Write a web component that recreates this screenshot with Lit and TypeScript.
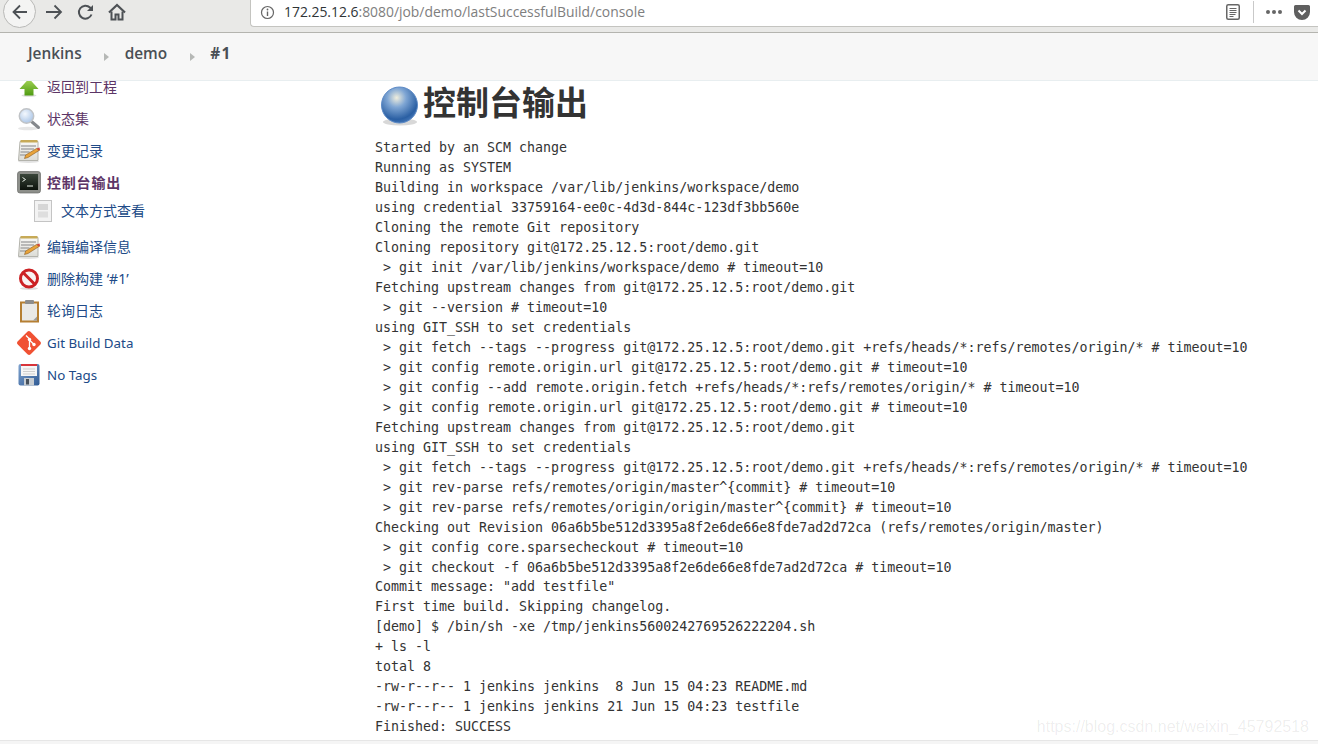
import { LitElement, html, css, svg } from "lit";
import { customElement } from "lit/decorators.js";

const LOG = `Started by an SCM change
Running as SYSTEM
Building in workspace /var/lib/jenkins/workspace/demo
using credential 33759164-ee0c-4d3d-844c-123df3bb560e
Cloning the remote Git repository
Cloning repository git@172.25.12.5:root/demo.git
 > git init /var/lib/jenkins/workspace/demo # timeout=10
Fetching upstream changes from git@172.25.12.5:root/demo.git
 > git --version # timeout=10
using GIT_SSH to set credentials
 > git fetch --tags --progress git@172.25.12.5:root/demo.git +refs/heads/*:refs/remotes/origin/* # timeout=10
 > git config remote.origin.url git@172.25.12.5:root/demo.git # timeout=10
 > git config --add remote.origin.fetch +refs/heads/*:refs/remotes/origin/* # timeout=10
 > git config remote.origin.url git@172.25.12.5:root/demo.git # timeout=10
Fetching upstream changes from git@172.25.12.5:root/demo.git
using GIT_SSH to set credentials
 > git fetch --tags --progress git@172.25.12.5:root/demo.git +refs/heads/*:refs/remotes/origin/* # timeout=10
 > git rev-parse refs/remotes/origin/master^{commit} # timeout=10
 > git rev-parse refs/remotes/origin/origin/master^{commit} # timeout=10
Checking out Revision 06a6b5be512d3395a8f2e6de66e8fde7ad2d72ca (refs/remotes/origin/master)
 > git config core.sparsecheckout # timeout=10
 > git checkout -f 06a6b5be512d3395a8f2e6de66e8fde7ad2d72ca # timeout=10
Commit message: "add testfile"
First time build. Skipping changelog.
[demo] $ /bin/sh -xe /tmp/jenkins5600242769526222204.sh
+ ls -l
total 8
-rw-r--r-- 1 jenkins jenkins  8 Jun 15 04:23 README.md
-rw-r--r-- 1 jenkins jenkins 21 Jun 15 04:23 testfile
Finished: SUCCESS`;

const notepad = (id: string) => svg`<svg width="24" height="24" viewBox="0 0 24 24">
  <defs><linearGradient id="${id}" x1="0" y1="0" x2="0" y2="1"><stop offset="0" stop-color="#f8f8f5"/><stop offset="1" stop-color="#dcdcd6"/></linearGradient></defs>
  <ellipse cx="11.500" cy="22.500" rx="10.500" ry="1.500" fill="#e2e2e2"/>
  <path d="M3 2.500h18v19H1.500z" fill="url(#${id})" stroke="#b3b3ac" stroke-width="1"/>
  <path d="M3.500 1h17v2.500h-17z" fill="#c7aa57"/>
  <path d="M4 7h15M4 10h13M3.500 13h9M3 16h6" stroke="#a8a8a8" stroke-width="1.300"/>
  <path d="M7.500 19.500l1.200-3.500L19.500 9.500l3 1.700L11 18.500z" fill="#e8a33a" stroke="#8a5a20" stroke-width=".6"/>
  <path d="M19.500 9.500l3-1 .5 2.500-1.200 .6z" fill="#d0473a"/>
</svg>`;

const ICONS: Record<string, unknown> = {
  up: svg`<svg width="24" height="24" viewBox="0 0 24 24">
    <defs><linearGradient id="g1" x1="0" y1="0" x2="0" y2="1"><stop offset="0" stop-color="#a7d65a"/><stop offset="1" stop-color="#4f9b12"/></linearGradient></defs>
    <ellipse cx="12" cy="20.500" rx="7.500" ry="1.300" fill="#dcdcdc"/>
    <path d="M12 3.500L21.500 14h-5v6.500h-9V14h-5z" fill="url(#g1)"/>
  </svg>`,
  search: svg`<svg width="24" height="24" viewBox="0 0 24 24">
    <defs><radialGradient id="g2" cx=".4" cy=".35" r=".7"><stop offset="0" stop-color="#f4f8fd"/><stop offset="1" stop-color="#a7c3e6"/></radialGradient></defs>
    <ellipse cx="11" cy="21.500" rx="10" ry="1.800" fill="#e6e6e6"/>
    <path d="M14.500 14.500l7 6" stroke="#85888c" stroke-width="3" stroke-linecap="round"/>
    <circle cx="9.500" cy="9" r="7.200" fill="url(#g2)" stroke="#c0c3c6" stroke-width="1.500"/>
  </svg>`,
  note: notepad("n1"),
  note2: notepad("n2"),
  term: svg`<svg width="24" height="24" viewBox="0 0 24 24">
    <defs><linearGradient id="g3" x1="0" y1="0" x2="0" y2="1"><stop offset="0" stop-color="#3a463a"/><stop offset="1" stop-color="#0c120c"/></linearGradient></defs>
    <rect x=".5" y=".5" width="23" height="21.500" rx="2.500" fill="#8d8f8a" stroke="#6a6c68" stroke-width=".7"/>
    <rect x="3" y="3" width="18" height="16" fill="url(#g3)"/>
    <path d="M5.500 6.500l3 2-3 2" fill="none" stroke="#e9efe7" stroke-width="1"/>
    <path d="M10 15h6" stroke="#e9efe7" stroke-width="1"/>
  </svg>`,
  text: svg`<svg width="18" height="22" viewBox="0 0 18 22">
    <rect x=".5" y=".5" width="17" height="21" fill="#f3f3f3" stroke="#c4c4c4"/>
    <rect x="4" y="4" width="10" height="6" fill="#d6d6d6"/>
    <rect x="4" y="11.500" width="10" height="6" fill="#dedede"/>
  </svg>`,
  no: svg`<svg width="24" height="24" viewBox="0 0 24 24">
    <ellipse cx="12" cy="21.500" rx="9" ry="1.500" fill="#ddd"/>
    <circle cx="12" cy="11.500" r="8.500" fill="#f8f2f2" stroke="#cc2124" stroke-width="3"/>
    <path d="M6 5.500l12 12" stroke="#cc2124" stroke-width="3"/>
  </svg>`,
  clip: svg`<svg width="24" height="24" viewBox="0 0 24 24">
    <rect x="3" y="2.500" width="19" height="21" fill="#b57f33"/>
    <rect x="5" y="4.500" width="15" height="17" fill="#e9e9e7"/>
    <path d="M16 21.500l4-4v4z" fill="#9c9c9c"/>
    <rect x="8" y="1" width="9" height="4" rx="1" fill="#8d8d8d"/>
  </svg>`,
  git: svg`<svg width="24" height="24" viewBox="0 0 24 24">
    <path d="M10.300.8L.8 10.300a2.300 2.300 0 0 0 0 3.200l9.700 9.700a2.300 2.300 0 0 0 3.200 0l9.500-9.500a2.300 2.300 0 0 0 0-3.200L13.500.8a2.300 2.300 0 0 0-3.200 0z" fill="#f05133"/>
    <path d="M9 4.500l3.500 3.500M12.500 8v9M12.500 9l4.500 4.500" stroke="#fff" stroke-width="1.300" fill="none"/>
    <circle cx="12.500" cy="8.500" r="1.700" fill="#fff"/><circle cx="12.500" cy="17.500" r="1.700" fill="#fff"/><circle cx="17" cy="13.500" r="1.700" fill="#fff"/>
  </svg>`,
  save: svg`<svg width="24" height="24" viewBox="0 0 24 24">
    <defs><linearGradient id="g4" x1="0" y1="0" x2="1" y2="1"><stop offset="0" stop-color="#7fa3cf"/><stop offset="1" stop-color="#2f5a94"/></linearGradient></defs>
    <rect x="1.500" y="1" width="21" height="21.500" rx="2" fill="url(#g4)"/>
    <rect x="4" y="1" width="16" height="12" fill="#f6f6f6"/>
    <rect x="4" y="1" width="16" height="2" fill="#d8343a"/>
    <path d="M6 6h12M6 8.500h12M6 11h12" stroke="#cfcfcf" stroke-width="1"/>
    <rect x="7" y="15" width="10" height="7.500" fill="#c6ccd2"/>
    <rect x="9" y="16" width="3" height="5.500" fill="#47505a"/>
  </svg>`,
};

interface Item { icon: string; label: string; cls?: string; }
const ITEMS: Item[] = [
  { icon: "up", label: "返回到工程", cls: "visited cjk" },
  { icon: "search", label: "状态集", cls: "visited cjk" },
  { icon: "note", label: "变更记录", cls: "cjk" },
  { icon: "term", label: "控制台输出", cls: "visited active cjk" },
  { icon: "text", label: "文本方式查看", cls: "sub cjk" },
  { icon: "note2", label: "编辑编译信息", cls: "cjk" },
  { icon: "no", label: "删除构建 ‘#1’", cls: "cjk" },
  { icon: "clip", label: "轮询日志", cls: "cjk" },
  { icon: "git", label: "Git Build Data" },
  { icon: "save", label: "No Tags" },
];

@customElement("app-root")
export class AppRoot extends LitElement {
  static styles = css`
    :host { display: block; width: 1318px; height: 744px; overflow: hidden; position: relative; background: #fff; }
    .toolbar { height: 33px; box-sizing: border-box; background: #e9e9e7; border-bottom: 1px solid #b4b4af; display: flex; align-items: flex-start; position: relative; z-index: 2; }
    .nav { width: 250px; height: 26px; display: flex; flex: none; position: relative; }
    .back { position: absolute; left: 3px; top: -5px; width: 33px; height: 33px; box-sizing: border-box; border-radius: 50%; border: 1px solid #b9b9b7; background: #f4f4f3; display: flex; align-items: center; justify-content: center; }
    .nav svg.n { position: absolute; top: 2px; }
    .url { flex: 1; height: 27px; box-sizing: border-box; background: #fff; border: 1px solid #c4c4c0; border-top: 0; border-right: 0; border-bottom-left-radius: 4px; padding-bottom: 2px; display: flex; align-items: center; font: 13.900px/24px "Open Sans", "Noto Sans", sans-serif; color: #7e7e7e; }
    .info { margin: 0 9px 0 9px; flex: none; }
    .host { color: #2e3436; }
    .spacer { flex: 1; }
    .tools { display: flex; align-items: center; height: 24px; }
    .sep { width: 1px; height: 22px; background: #c9c9c9; margin: 0 12px 0 13px; }
    .dots { display: flex; gap: 2px; margin-right: 12px; }
    .dots i { width: 4px; height: 4px; border-radius: 50%; background: #666; }
    .pocket { margin-right: 8px; }
    .crumbs { height: 48px; box-sizing: border-box; background: #f7f7f7; border-bottom: 1px solid #e8eef0; display: flex; align-items: center; padding: 0 0 7px 28px; font: 600 15.400px "Open Sans", "Noto Sans", sans-serif; color: #4a4f55; position: relative; z-index: 2; }
    .arrow { width: 0; height: 0; border-left: 5px solid #b6b8b6; border-top: 4px solid transparent; border-bottom: 4px solid transparent; position: relative; top: 4px; margin-left: 22px; margin-right: 16px; }
    .arrow.two { margin-left: 23px; margin-right: 15px; }
    .hash { letter-spacing: 1.500px; font-weight: 700; }
    .content { display: flex; margin-top: -10px; align-items: flex-start; }
    .side { width: 375px; flex: none; box-sizing: border-box; padding: 0 0 0 17px; font: 13.330px "Noto Sans", "Noto Sans CJK SC", sans-serif; color: #204a87; }
    .row { height: 32px; display: flex; align-items: center; }
    .row .lbl { margin-bottom: 1px; }
    .row.cjk .lbl { margin-bottom: 3px; }
    .ic { width: 24px; height: 24px; margin-right: 6px; display: flex; align-items: center; justify-content: center; flex: none; }
    .cjk { font-size: 14px; }
    .visited { color: #5c3566; }
    .active { font-weight: 700; letter-spacing: .8px; }
    .sub { height: 24px; padding-left: 17px; margin-bottom: 8px; }
    .sub .ic { width: 18px; height: 22px; margin-right: 9px; }
    .main { flex: 1; min-width: 0; padding-top: 11px; }
    h1 { margin: 0 0 0 5px; height: 44px; display: flex; align-items: center; gap: 3px; font: 700 33px/44px "Noto Sans CJK SC", sans-serif; color: #333; }
    h1 span { margin-top: -6px; }
    .log { margin: 12.160px 0 0; font: 13.312px/19.968px "DejaVu Sans Mono", monospace; color: #333; }
    .line { width: fit-content; white-space: pre; }
    .foot { position: absolute; left: 0; right: 0; bottom: 0; height: 4px; background: #f5f5f5; border-top: 1px solid #e6e6e6; box-sizing: border-box; }
    .mark { position: absolute; right: 9px; bottom: 8px; font: 16px "Liberation Sans", sans-serif; color: rgba(0,0,0,.08); }
  `;

  render() {
    const navStroke = "#4d5155";
    return html`
      <div class="toolbar">
        <div class="nav">
          <div class="back"><svg width="20" height="20" viewBox="0 0 20 20"><path d="M17 10H3.500M10 3.500L3.500 10l6.500 6.500" fill="none" stroke="${navStroke}" stroke-width="1.800"/></svg></div>
          <svg class="n" style="left:44px" width="20" height="20" viewBox="0 0 20 20"><path d="M2 10h15M10.500 3.500L17 10l-6.500 6.500" fill="none" stroke="${navStroke}" stroke-width="1.800"/></svg>
          <svg class="n" style="left:76px" width="20" height="20" viewBox="0 0 20 20"><path d="M15.500 12.500A6.500 6.500 0 1 1 14 5.500l2 2" fill="none" stroke="${navStroke}" stroke-width="2"/><path d="M17 3v6h-6z" fill="${navStroke}"/></svg>
          <svg class="n" style="left:107px" width="20" height="20" viewBox="0 0 20 20"><path d="M2 10.500L10 3l8 7.500" fill="none" stroke="${navStroke}" stroke-width="2.200"/><path d="M4.500 9.500v8h4v-5h3v5h4v-8" fill="none" stroke="${navStroke}" stroke-width="2"/></svg>
        </div>
        <div class="url">
          <svg class="info" width="15" height="15" viewBox="0 0 15 15"><circle cx="7.500" cy="7.500" r="6" fill="none" stroke="#666" stroke-width="1.200"/><path d="M7.500 6.500v4.500" stroke="#666" stroke-width="1.400"/><circle cx="7.500" cy="4.500" r=".9" fill="#666"/></svg>
          <span><span class="host">172.25.12.6</span>:8080/job/demo/lastSuccessfulBuild/console</span>
          <span class="spacer"></span>
          <div class="tools">
            <svg width="14" height="16" viewBox="0 0 14 16"><rect x=".75" y=".75" width="12.500" height="14.500" rx="1.500" fill="#fff" stroke="#666" stroke-width="1.500"/><path d="M3.500 4.500h7M3.500 6.500h7M3.500 8.500h7M3.500 10.500h6M3.500 12.500h4" stroke="#666" stroke-width="1"/></svg>
            <span class="sep"></span>
            <span class="dots"><i></i><i></i><i></i></span>
            <svg class="pocket" width="16" height="15" viewBox="0 0 16 15"><path d="M1.500 0h13A1.500 1.500 0 0 1 16 1.500V7a8 8 0 0 1-16 0V1.500A1.500 1.500 0 0 1 1.500 0z" fill="#5f5f5f"/><path d="M4.500 5.500L8 9l3.500-3.500" fill="none" stroke="#fff" stroke-width="2"/></svg>
          </div>
        </div>
      </div>
      <div class="crumbs">
        <span>Jenkins</span><i class="arrow"></i><span>demo</span><i class="arrow two"></i><span class="hash">#1</span>
      </div>
      <div class="content">
        <nav class="side">
          ${ITEMS.map(i => html`<div class="row ${i.cls ?? ""}"><span class="ic">${ICONS[i.icon]}</span><span class="lbl">${i.label}</span></div>`)}
        </nav>
        <main class="main">
          <h1>
            <svg width="40" height="44" viewBox="0 0 40 44">
              <defs><radialGradient id="ball" cx=".42" cy=".3" r=".75"><stop offset="0" stop-color="#f0eedd"/><stop offset=".35" stop-color="#7fa6d4"/><stop offset=".8" stop-color="#2a5fa3"/><stop offset="1" stop-color="#4a7cbc"/></radialGradient></defs>
              <ellipse cx="20" cy="40" rx="17" ry="3.500" fill="#d8d8d8"/>
              <circle cx="19.500" cy="23" r="18" fill="url(#ball)" stroke="#5f8cc7" stroke-width="1"/>
            </svg>
            <span>控制台输出</span>
          </h1>
          <div class="log">${LOG.split("\n").map(l => html`<div class="line">${l}</div>`)}</div>
        </main>
      </div>
      <div class="mark">https://blog.csdn.net/weixin_45792518</div>
      <div class="foot"></div>
    `;
  }
}
